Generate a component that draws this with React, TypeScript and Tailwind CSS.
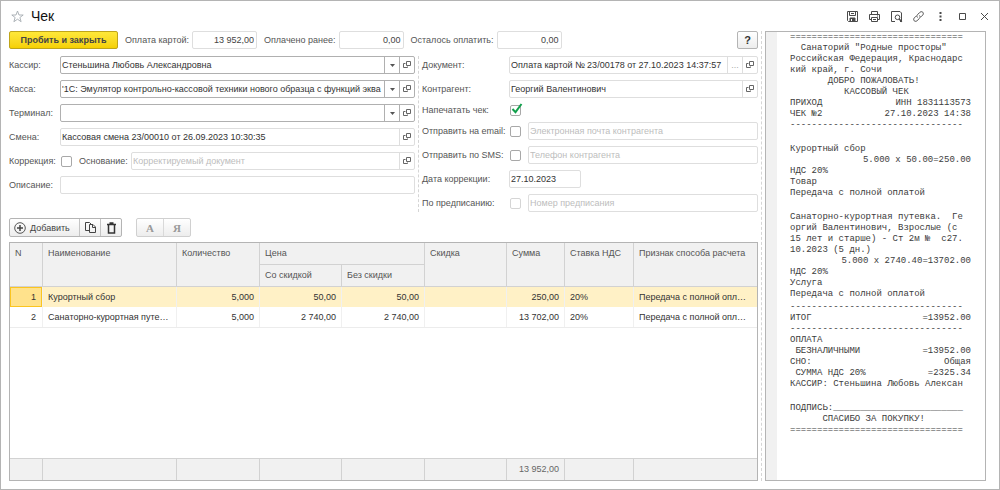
import { clsx } from "clsx";
import type { ReactNode } from "react";

const rows = [
  { n: 1, name: "Курортный сбор", qty: "5,000", withDiscount: "50,00", price: "50,00", sum: "250,00", vat: "20%", method: "Передача с полной опл…" },
  { n: 2, name: "Санаторно-курортная путе…", qty: "5,000", withDiscount: "2 740,00", price: "2 740,00", sum: "13 702,00", vat: "20%", method: "Передача с полной опл…" },
];

const DOUBLE = "=".repeat(32);
const DASHES = "-".repeat(32);

// A line is either one string or a [left, right] pair pushed to the edges.
type Line = string | [string, string];

const receipt: Line[][] = [
  [
    DOUBLE,
    "  Санаторий \"Родные просторы\"",
    "Российская Федерация, Краснодарс",
    "кий край, г. Сочи",
    "       ДОБРО ПОЖАЛОВАТЬ!",
    "          КАССОВЫЙ ЧЕК",
    ["ПРИХОД", "ИНН 1831113573"],
    ["ЧЕК №2", "27.10.2023 14:38"],
    DASHES,
  ],
  [
    " ",
    "Курортный сбор",
    ["", "5.000 x 50.00=250.00"],
    "НДС 20%",
    "Товар",
    "Передача с полной оплатой",
  ],
  [
    " ",
    "Санаторно-курортная путевка.  Ге",
    "оргий Валентинович, Взрослые (с",
    "15 лет и старше) - Ст 2м №  с27.",
    "10.2023 (5 дн.)",
    ["", "5.000 x 2740.40=13702.00"],
    "НДС 20%",
    "Услуга",
    "Передача с полной оплатой",
  ],
  [
    DASHES,
    ["ИТОГ", "=13952.00"],
    DASHES,
    "ОПЛАТА",
    [" БЕЗНАЛИЧНЫМИ", "=13952.00"],
    ["СНО:", "Общая"],
    [" СУММА НДС 20%", "=2325.34"],
    "КАССИР: Стеньшина Любовь Алексан",
    " ",
  ],
  ["ПОДПИСЬ:" + "_".repeat(24), "      СПАСИБО ЗА ПОКУПКУ!", DOUBLE],
];

function OpenIcon() {
  return (
    <svg width="8" height="8" viewBox="0 0 8 8" fill="none" stroke="#666" aria-hidden="true">
      <path d="M3.5.5h4v4h-4z" />
      <path d="M2.5 2.5h-2v4h4v-1" />
    </svg>
  );
}

function ArrowIcon() {
  return (
    <svg width="5" height="3" viewBox="0 0 5 3" fill="#555" aria-hidden="true">
      <path d="M0 0h5L2.5 3z" />
    </svg>
  );
}

type FieldProps = {
  id: string;
  value?: string;
  placeholder?: string;
  strong?: boolean;
  disabled?: boolean;
  className?: string;
  select?: boolean;
  more?: boolean;
  open?: boolean;
};

function Field({ id, value = "", placeholder, strong, disabled, className, select, more, open }: FieldProps) {
  const line = strong ? "border-[#b0b0b0]" : "border-[#dedede]";
  const button = clsx("flex w-[15px] shrink-0 items-center justify-center border-l", line);
  return (
    <div className={clsx("flex h-[18px] min-w-0 overflow-hidden rounded-xs border bg-white", line, className)}>
      <input
        id={id}
        defaultValue={value}
        placeholder={placeholder}
        disabled={disabled}
        className="min-w-0 flex-1 px-px text-[#333] outline-none placeholder:text-[#bdbdbd]"
      />
      {select && <button type="button" aria-label="Выбрать" className={button}><ArrowIcon /></button>}
      {more && <button type="button" aria-label="Подробнее" className={clsx(button, "text-[#aaa]")}>...</button>}
      {open && <button type="button" aria-label="Открыть" className={button}><OpenIcon /></button>}
    </div>
  );
}

function Check({ id, checked, disabled }: { id: string; checked?: boolean; disabled?: boolean }) {
  return (
    <span className="relative ml-px size-[11px] shrink-0">
      <input
        id={id}
        type="checkbox"
        defaultChecked={checked}
        disabled={disabled}
        className="peer block size-[11px] appearance-none rounded-xs border border-[#a8a8a8] bg-white disabled:border-[#d5d5d5]"
      />
      <svg className="pointer-events-none absolute -top-0.5 left-px hidden peer-checked:block" width="12" height="12" viewBox="0 0 12 12" fill="none" stroke="#12a04c" strokeWidth="2" aria-hidden="true">
        <path d="M1.5 6l3 3.2L10.5 1" />
      </svg>
    </span>
  );
}

function LeftRow({ id, label, children }: { id: string; label: string; children: ReactNode }) {
  return (
    <div className="flex items-center">
      <label htmlFor={id} className="w-[51px] shrink-0 whitespace-nowrap">{label}</label>
      {children}
    </div>
  );
}

function RightRow({ id, label, className, children }: { id: string; label: string; className?: string; children: ReactNode }) {
  return (
    <div className={clsx("flex items-center", className)}>
      <label htmlFor={id} className="w-[87px] shrink-0 whitespace-nowrap">{label}</label>
      {children}
    </div>
  );
}

function Total({ id, label, value }: { id: string; label: string; value: string }) {
  return (
    <div className="flex items-center gap-[3px]">
      <label htmlFor={id} className="whitespace-nowrap">{label}</label>
      <input
        id={id}
        readOnly
        defaultValue={value}
        className="h-[18px] w-[65px] rounded-xs border border-[#dedede] px-0.5 text-right text-[#444] outline-none"
      />
    </div>
  );
}

function IconButton({ label, children }: { label: string; children: ReactNode }) {
  return (
    <button type="button" aria-label={label} className="flex w-[22px] items-center justify-center">
      <svg width="13" height="13" viewBox="0 0 13 13" fill="none" stroke="#4a4a4a" aria-hidden="true">{children}</svg>
    </button>
  );
}

function TitleBar() {
  return (
    <header className="flex h-[30px] items-center pl-2 pr-1">
      <button type="button" aria-label="В избранное" className="ml-0.5">
        <svg width="13" height="13" viewBox="0 0 13 13" fill="none" stroke="#a5abb1" strokeWidth=".9" aria-hidden="true">
          <path d="M6.5 1l1.5 4h4.2L8.9 7.5l1.2 4.2-3.6-2.5-3.6 2.5 1.2-4.2L.8 5H5z" />
        </svg>
      </button>
      <h1 className="ml-[7px] flex-1 text-[14px] leading-5 text-[#111]">Чек</h1>
      <div className="flex h-5">
        <IconButton label="Сохранить">
          <path d="M1.5 1.5h10v10h-9l-1-1z" />
          <path d="M3.5 1.5v4h6v-4M5 3.5h3" />
          <path d="M4 8h5v3.5H4z" fill="#4a4a4a" />
          <path d="M5.5 9v2" stroke="#fff" />
        </IconButton>
        <IconButton label="Печать">
          <path d="M3.5 4V1.500h6V4M3.500 9.500h-2v-5h10v5h-2" />
          <path d="M3.500 7.500h6v4h-6zM5 9.500h3M9 6h1" />
        </IconButton>
        <IconButton label="Просмотр">
          <path d="M5 11.500H1.500v-10h8.500l1.500 1.500v8.500h-1.500" />
          <circle cx="7.500" cy="7.300" r="2.300" />
          <path d="M9.200 9l2.600 2.800" strokeWidth="1.400" />
        </IconButton>
        <IconButton label="Ссылка">
          <path d="M5.500 7.500c-1-1-.8-2 0-2.800l2.300-2.300c2.200-2 4.800.6 2.800 2.800L9 6.800" />
          <path d="M7.500 5.500c1 1 .8 2 0 2.800l-2.300 2.300c-2.200 2-4.800-.6-2.800-2.800L4 6.200" />
        </IconButton>
        <IconButton label="Ещё">
          <path d="M5.500 2h2v2h-2zM5.500 5.500h2v2h-2zM5.500 9h2v2h-2z" fill="#4a4a4a" stroke="none" />
        </IconButton>
        <IconButton label="Развернуть">
          <path d="M3.500 3.500h6v6h-6z" />
        </IconButton>
        <IconButton label="Закрыть">
          <path d="M3 3l7 7M10 3l-7 7" />
        </IconButton>
      </div>
    </header>
  );
}

function Toolbar() {
  const group = "flex h-[19px] rounded-xs border bg-linear-to-b from-white to-[#ededed]";
  return (
    <div className="mt-1.5 flex gap-3.5">
      <div className={clsx(group, "divide-x divide-[#c4c4c4] border-[#b4b4b4] text-[#444]")}>
        <button type="button" className="flex w-[70px] items-center gap-1 pl-1">
          <svg width="12" height="12" viewBox="0 0 12 12" fill="none" stroke="#444" aria-hidden="true">
            <circle cx="6" cy="6" r="5.300" strokeWidth=".9" />
            <path d="M6 3v6M3 6h6" strokeWidth="1.500" />
          </svg>
          Добавить
        </button>
        <button type="button" aria-label="Скопировать" className="flex w-[21px] items-center justify-center">
          <svg width="13" height="13" viewBox="0 0 13 13" fill="none" stroke="#444" aria-hidden="true">
            <path d="M5 9.500H1.500v-8h4l2 2" />
            <path d="M5.500 3.500h3.500l2.500 2.500v5.500h-6zM8.500 3.500v3h3" />
          </svg>
        </button>
        <button type="button" aria-label="Удалить" className="flex w-5 items-center justify-center">
          <svg width="11" height="12" viewBox="0 0 11 12" fill="none" stroke="#333" aria-hidden="true">
            <path d="M1 2.500h9M3.500 1h4" strokeWidth="1.500" />
            <path d="M2.500 3v8h6V3" strokeWidth="1.500" />
          </svg>
        </button>
      </div>
      <div className={clsx(group, "divide-x divide-[#d9d9d9] border-[#d0d0d0] font-['Liberation_Serif',serif] text-[11px] font-bold text-[#999]")}>
        <button type="button" className="w-[27px]">А</button>
        <button type="button" className="w-[26px]">Я</button>
      </div>
    </div>
  );
}

function ItemsTable() {
  const head = "border-b border-l border-[#d2d2d2] px-[5px] py-1 text-left align-top font-normal";
  const cell = "truncate border-l border-[#f0f0f0] px-[5px]";
  const foot = "border-l border-t border-[#d2d2d2] px-[5px] first:border-l-0";
  return (
    <div className="mt-[5px] grid flex-1 border border-[#b4b4b4]">
      <table className="h-full w-full table-fixed border-separate border-spacing-0 leading-[13px]">
        <colgroup>
          <col className="w-8" />
          <col className="w-[134px]" />
          <col className="w-[83px]" />
          <col className="w-[82px]" />
          <col className="w-[83px]" />
          <col className="w-[82px]" />
          <col className="w-[58px]" />
          <col className="w-[69px]" />
          <col />
        </colgroup>
        <thead className="bg-[#f1f1f1] text-[#555]">
          <tr className="h-[22px]">
            <th rowSpan={2} className={clsx(head, "border-l-0")}>N</th>
            <th rowSpan={2} className={head}>Наименование</th>
            <th rowSpan={2} className={head}>Количество</th>
            <th colSpan={2} className={head}>Цена</th>
            <th rowSpan={2} className={head}>Скидка</th>
            <th rowSpan={2} className={head}>Сумма</th>
            <th rowSpan={2} className={head}>Ставка НДС</th>
            <th rowSpan={2} className={head}>Признак способа расчета</th>
          </tr>
          <tr className="h-[22px]">
            <th className={head}>Со скидкой</th>
            <th className={head}>Без скидки</th>
          </tr>
        </thead>
        <tbody className="text-[#333]">
          {rows.map((row, i) => (
            <tr key={row.n} className={clsx("h-5", i === 0 && "bg-[#fff1c6]")}>
              <td className={clsx("border px-[5px] text-right", i === 0 ? "border-[#fbc520] bg-[#ffe28c]" : "border-transparent")}>{row.n}</td>
              <td className={cell}>{row.name}</td>
              <td className={clsx(cell, "text-right")}>{row.qty}</td>
              <td className={clsx(cell, "text-right")}>{row.withDiscount}</td>
              <td className={clsx(cell, "text-right")}>{row.price}</td>
              <td className={cell} />
              <td className={clsx(cell, "text-right")}>{row.sum}</td>
              <td className={cell}>{row.vat}</td>
              <td className={cell}>{row.method}</td>
            </tr>
          ))}
          <tr>
            <td colSpan={9} className="border-t border-[#ececec]" />
          </tr>
        </tbody>
        <tfoot className="bg-[#f1f1f1] text-[#666]">
          <tr className="h-[22px]">
            <td className={foot} />
            <td className={foot} />
            <td className={foot} />
            <td className={foot} />
            <td className={foot} />
            <td className={foot} />
            <td className={clsx(foot, "text-right")}>13 952,00</td>
            <td className={foot} />
            <td className={foot} />
          </tr>
        </tfoot>
      </table>
    </div>
  );
}

function Receipt() {
  return (
    <aside className="flex w-[221px] shrink-0 border border-[#b4b4b4]">
      <div className="w-[11px] bg-[#f1f1f1]" />
      <div className="ml-[13px] flex w-[181px] flex-col gap-0.5 whitespace-pre font-['Liberation_Mono',monospace] text-[9px] leading-[11px] text-[#3c3c3c]">
        {receipt.map((block, i) => (
          <div key={i}>
            {block.map((line, j) =>
              typeof line === "string" ? (
                <p key={j}>{line}</p>
              ) : (
                <p key={j} className="flex justify-between">
                  <span>{line[0]}</span>
                  <span>{line[1]}</span>
                </p>
              )
            )}
          </div>
        ))}
      </div>
    </aside>
  );
}

export default function App() {
  return (
    <div className="flex min-h-screen flex-col border border-[#b4b4b4] bg-white font-['Liberation_Sans',Arial,sans-serif] text-[9px] leading-3 text-[#555]">
      <TitleBar />
      <div className="flex flex-1 gap-[3px] pb-2 pl-2 pr-[13px]">
        <main className="flex min-w-0 flex-1 flex-col">
          <div className="flex items-center gap-[7px]">
            <button type="button" className="h-[18px] w-[109px] rounded-xs border border-[#bfa51a] bg-linear-to-b from-[#ffe838] to-[#f5d000] font-bold text-[#444]">
              Пробить и закрыть
            </button>
            <Total id="card" label="Оплата картой:" value="13 952,00" />
            <Total id="paid" label="Оплачено ранее:" value="0,00" />
            <Total id="left" label="Осталось оплатить:" value="0,00" />
            <button type="button" aria-label="Справка" className="ml-auto h-[18px] w-[21px] rounded-xs border border-[#b4b4b4] bg-linear-to-b from-white to-[#ededed] text-[11px] font-bold text-[#333]">
              ?
            </button>
          </div>

          <form className="mt-[7px] flex gap-[3px]">
            <div className="flex flex-[406_1_0%] flex-col gap-1.5">
              <LeftRow id="cashier" label="Кассир:">
                <Field id="cashier" value="Стеньшина Любовь Александровна" strong select open className="flex-1" />
              </LeftRow>
              <LeftRow id="register" label="Касса:">
                <Field id="register" value="'1С: Эмулятор контрольно-кассовой техники нового образца с функций эква" strong select open className="flex-1" />
              </LeftRow>
              <LeftRow id="terminal" label="Терминал:">
                <Field id="terminal" strong select open className="flex-1" />
              </LeftRow>
              <LeftRow id="shift" label="Смена:">
                <Field id="shift" value="Кассовая смена 23/00010 от 26.09.2023 10:30:35" open className="flex-1" />
              </LeftRow>
              <LeftRow id="correction" label="Коррекция:">
                <Check id="correction" />
                <label htmlFor="basis" className="ml-[7px] w-[52px] shrink-0">Основание:</label>
                <Field id="basis" placeholder="Корректируемый документ" open className="flex-1" />
              </LeftRow>
              <LeftRow id="description" label="Описание:">
                <Field id="description" className="flex-1" />
              </LeftRow>
            </div>
            <div className="border-l border-dashed border-[#d5d5d5]" />
            <div className="flex flex-[336_1_0%] flex-col gap-1.5">
              <RightRow id="document" label="Документ:">
                <Field id="document" value="Оплата картой № 23/00178 от 27.10.2023 14:37:57" more open className="flex-1" />
              </RightRow>
              <RightRow id="party" label="Контрагент:">
                <Field id="party" value="Георгий Валентинович" open className="flex-1" />
              </RightRow>
              <RightRow id="print" label="Напечатать чек:" className="h-3">
                <Check id="print" checked />
              </RightRow>
              <RightRow id="send-email" label="Отправить на email:">
                <Check id="send-email" />
                <Field id="email" placeholder="Электронная почта контрагента" className="ml-[7px] flex-1" />
              </RightRow>
              <RightRow id="send-sms" label="Отправить по SMS:">
                <Check id="send-sms" />
                <Field id="phone" placeholder="Телефон контрагента" className="ml-[7px] flex-1" />
              </RightRow>
              <RightRow id="date" label="Дата коррекции:">
                <Field id="date" value="27.10.2023" className="w-[72px]" />
              </RightRow>
              <RightRow id="order" label="По предписанию:">
                <Check id="order" disabled />
                <Field id="order-no" placeholder="Номер предписания" disabled className="ml-[7px] flex-1" />
              </RightRow>
            </div>
          </form>

          <Toolbar />
          <ItemsTable />
        </main>
        <div className="border-l border-dashed border-[#d5d5d5]" />
        <Receipt />
      </div>
    </div>
  );
}
